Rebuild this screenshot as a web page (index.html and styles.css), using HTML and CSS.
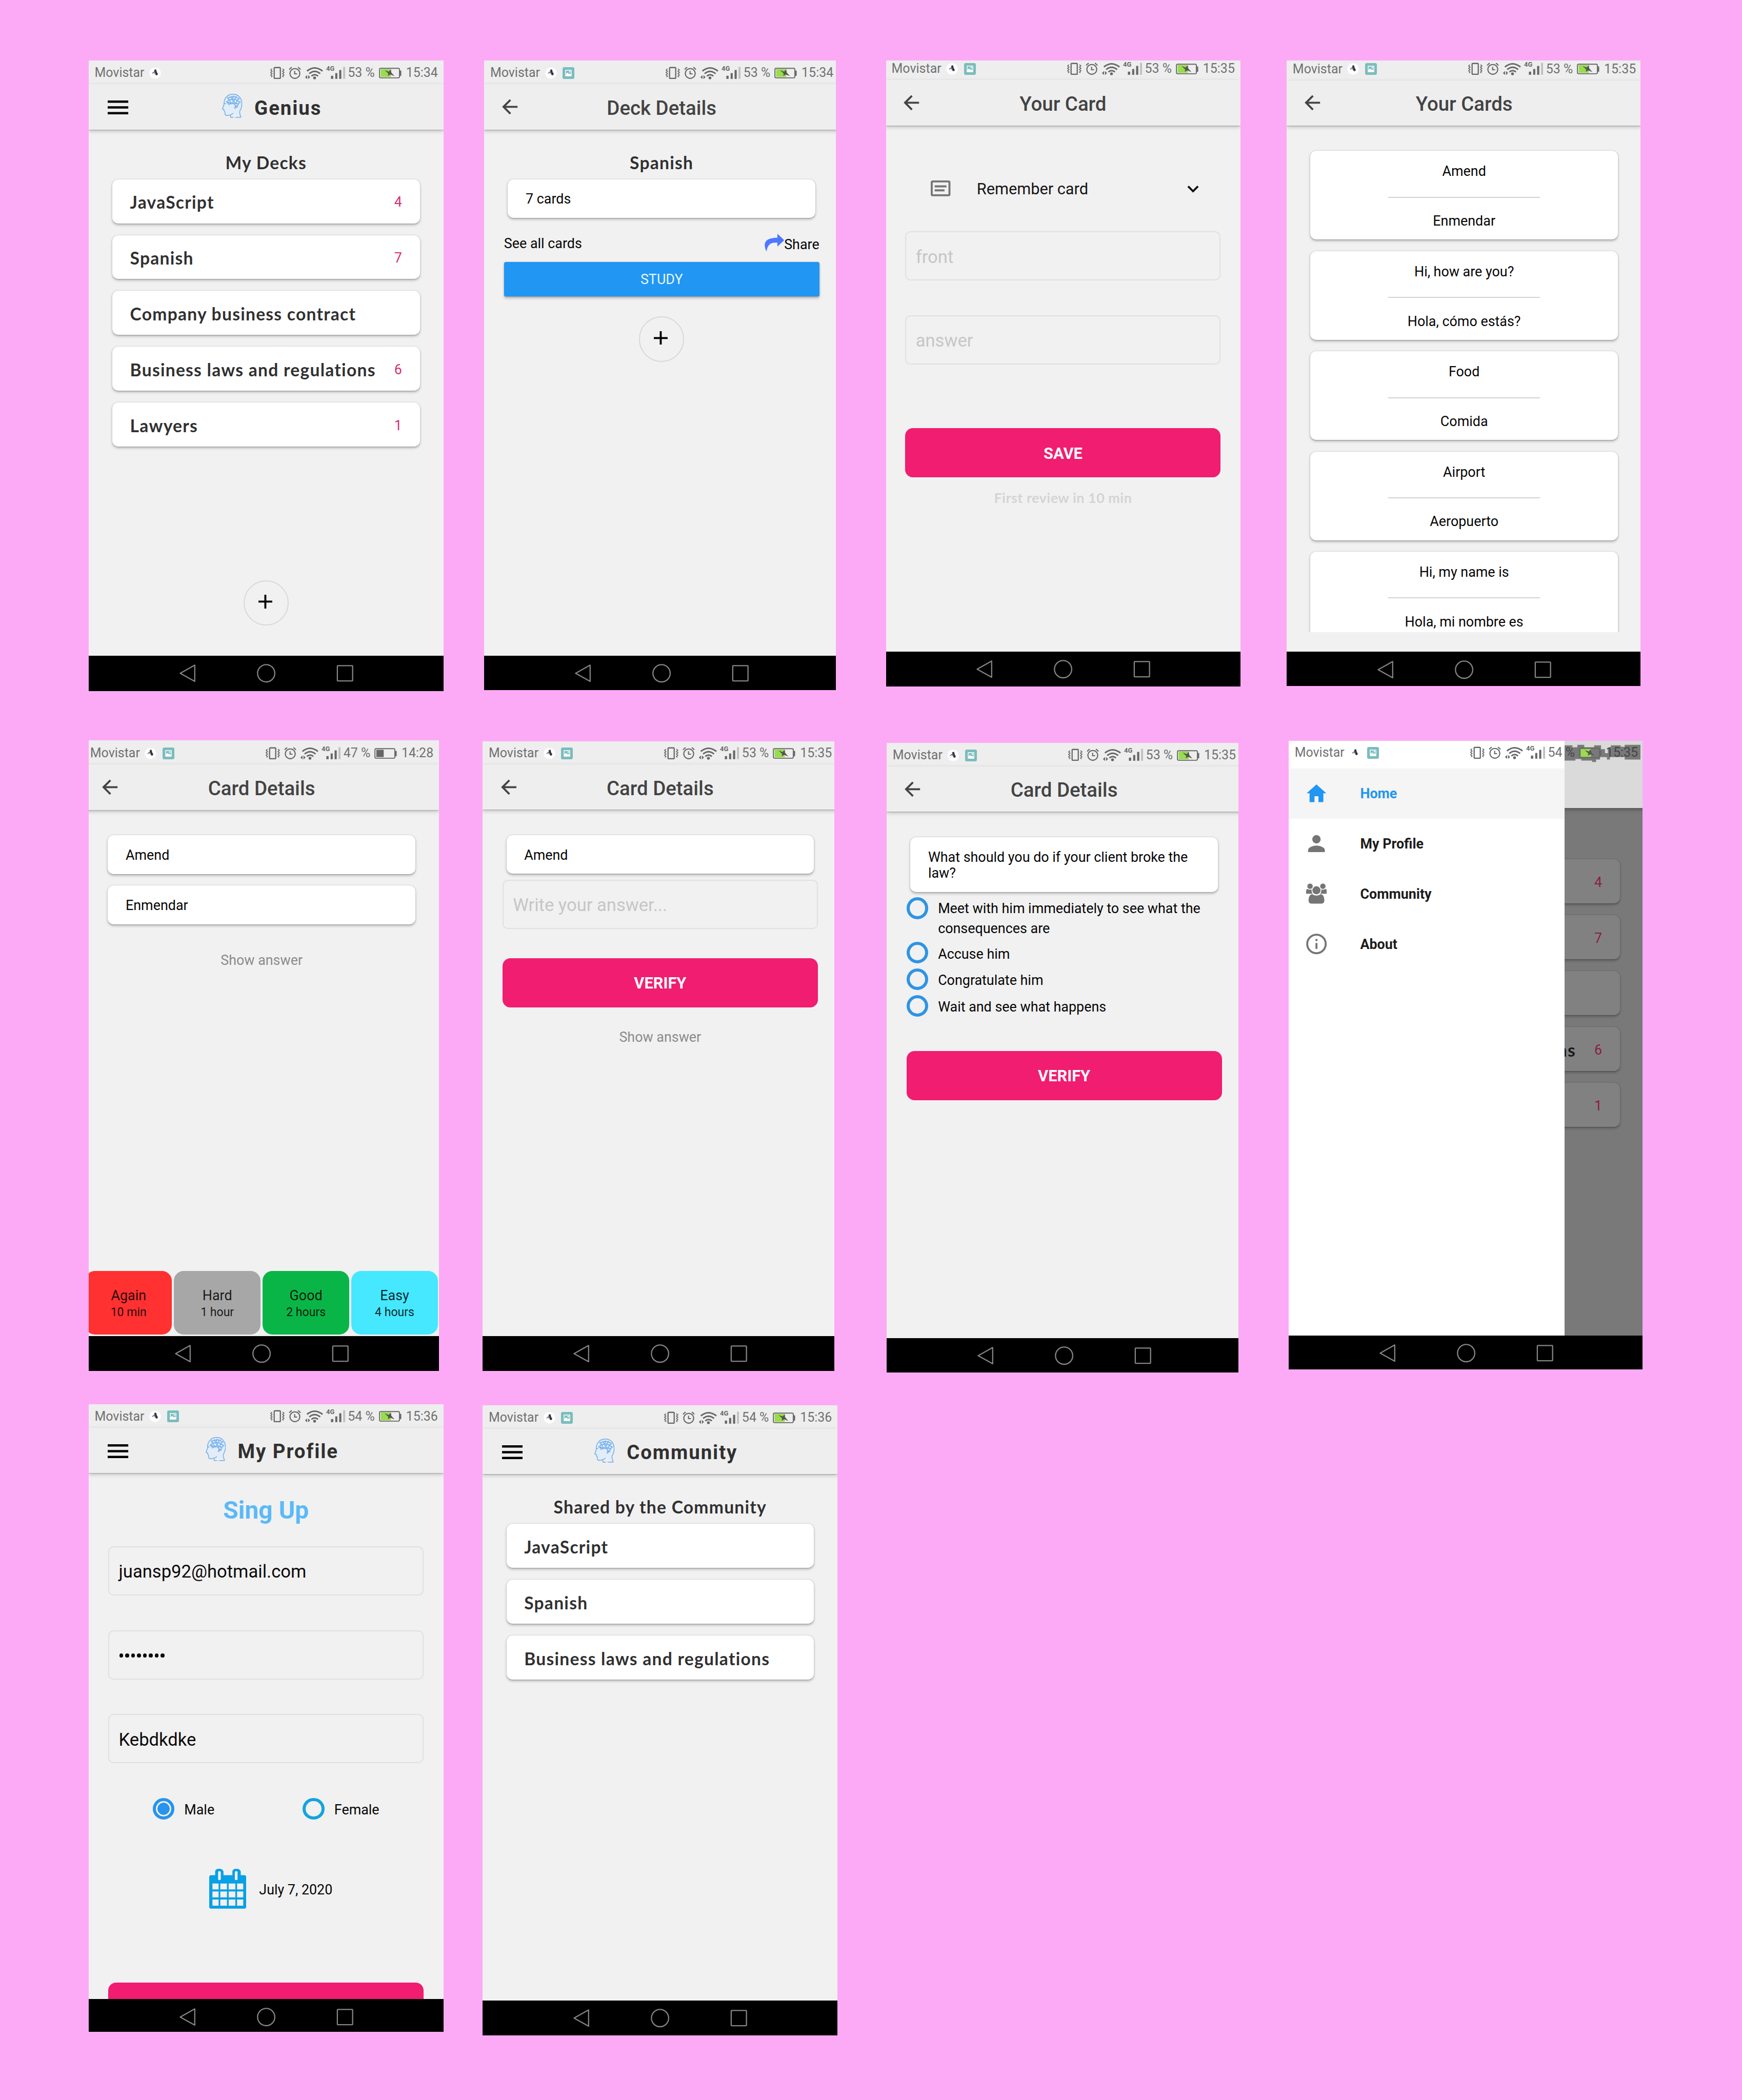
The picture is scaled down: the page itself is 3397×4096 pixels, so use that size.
FILE: index.html
```html
<!DOCTYPE html>
<html lang="en">
<head>
<meta charset="utf-8">
<title>Genius – screens</title>
<link rel="stylesheet" href="styles.css">
</head>
<body>
<svg class="sprite" aria-hidden="true">
  <symbol id="sys" viewBox="0 0 152 32">
    <g fill="none" stroke="#666">
      <rect x="8" y="6" width="12.5" height="22" rx="1.5" stroke-width="2.4"/>
      <path d="M3.8 8.5l-3 2.5 3 2.5-3 2.5 3 2.5-3 2.5 3 2.5-2 2M25 8.5l3 2.5-3 2.5 3 2.5-3 2.5 3 2.5-3 2.5 2 2" stroke-width="1.7"/>
      <circle cx="50" cy="18" r="10" stroke-width="2.2"/>
      <path d="M38.6 10.2q1.8-3.4 5.2-4.8M61.4 10.2q-1.8-3.4-5.2-4.8" stroke-width="2.2"/>
      <path d="M49.6 12.8v6h5" stroke-width="2.2"/>
      <path d="M74.6 13.2q15.4-13 31.6 0M79.2 18.4q11-9.4 22.2 0M83.6 23.4q6.6-5.6 13.4 0" stroke-width="3"/>
    </g>
    <g fill="#666">
      <circle cx="90" cy="27" r="2.9"/>
      <path d="M70.6 25.4l4.2-4v8zM81 25.4l-4.2-4v8z"/>
      <rect x="123.3" y="22.7" width="4.6" height="6.3"/>
      <rect x="132" y="17.3" width="4.2" height="11.7"/>
      <rect x="140" y="11" width="4.3" height="18"/>
      <rect x="148" y="4.7" width="4" height="24.3" fill="#c0c0c0"/>
      <text x="113.6" y="12" class="net">4G</text>
    </g>
  </symbol>
  <symbol id="bat-charge" viewBox="0 0 46 24">
    <rect x="3.6" y="4" width="20.8" height="16" fill="#99dc4c"/>
    <rect x="1.2" y="2.3" width="40.4" height="19.4" rx="2.4" fill="none" stroke="#666" stroke-width="2"/>
    <path d="M42.6 6.7h1.4q1.3 0 1.3 1.4v8.4q0 1.4-1.3 1.4h-1.4z" fill="#666"/>
    <path d="M11.5 6l8.2 3.2 4.6-4.4.6 6 6.8 7.6-8.2-3.6-5.4 3 .8-4.8z" fill="#555"/>
  </symbol>
  <symbol id="bat-half" viewBox="0 0 46 24">
    <rect x="4" y="4.6" width="15" height="14.8" fill="#666"/>
    <rect x="1.2" y="2.3" width="40.4" height="19.4" rx="2.4" fill="none" stroke="#666" stroke-width="2"/>
    <path d="M42.6 6.7h1.4q1.3 0 1.3 1.4v8.4q0 1.4-1.3 1.4h-1.4z" fill="#666"/>
  </symbol>
  <symbol id="bug" viewBox="0 0 24 24">
    <circle cx="12" cy="12" r="11.5" fill="#fff"/>
    <path d="M10 5.5l4-1 1.6 6.2 2 2.6-1 2.8-2.8.4-1.4-2-.8-4.4z" fill="#2f3340"/>
    <path d="M11 8.6L6 12.8M11.4 9.6l-1.2 3.6" stroke="#44485a" stroke-width="1.2" fill="none"/>
  </symbol>
  <symbol id="photo" viewBox="0 0 24 24">
    <rect width="24" height="24" rx="3.5" fill="#7bbcbd"/>
    <path fill="#fff" fill-rule="evenodd" d="M5.5 5.5h13v13h-13zM7 7v7l3-3 3 3 1.500-1.500 2.500 2.500V7z"/>
    <circle cx="14.600" cy="9.400" r="1.500" fill="#fff"/>
  </symbol>
  <symbol id="menu" viewBox="0 0 42 28">
    <path d="M0 0h42v4.700H0zM0 11.650h42v4.700H0zM0 23.300h42v4.700H0z"/>
  </symbol>
  <symbol id="back" viewBox="0 0 32 32">
    <path d="M31.500 16H3M17 2L3 16l14 14" fill="none" stroke="#444" stroke-width="4"/>
  </symbol>
  <symbol id="head" viewBox="0 0 41 49">
    <g fill="none" stroke="#6aa9ea" stroke-width="1.500">
      <path d="M38.500 47.600H27.500M25 47.600h.8M23 47.600h-5.500l-.6-4.200M38.500 47.600q-3.300-8-2.500-12.500 4.300-6.800 4.300-14.500C40.300 8 32.500.8 22.500.8 11 .8 4 8.800 4 19.500q.2 4-1.800 7.300L.8 30q.2 1.600 3 2l.4 3 1.400 1.200.6 5.600q1 2.600 5.300 2.100 7-.6 11.300-4.300M4 20h4" fill="#e2edf8"/>
      <path d="M10 16.500l4.500-4.500L12 8l6-1.500 5-1 5.500 1L34 10l-3.500 3.500L36 17l-3.500 4-4-1.500L24 20l-5-.5-5 1.500zM18 6.500l2.500 5 5-.5 3-4.500M14.500 12l6-.5 3 5 5 3M10 16.500l9 3 4.500-3 2-5.500 5 2.500-2 6M14.500 12l4.500 7.500M23.500 16.500L20.500 11.500 23 5.500M24 20l3 3.500-.5 5M32.500 21l-2 5-4 2.500M27 23.500l3.500 2.500"/>
    </g>
    <g fill="#bcd8f6" stroke="#5fa3ea" stroke-width="1">
      <circle cx="12" cy="8.500" r="1.400"/><circle cx="18" cy="6.500" r="1.400"/><circle cx="23" cy="5.500" r="1.400"/><circle cx="28.500" cy="6.500" r="1.400"/><circle cx="34" cy="10" r="1.400"/><circle cx="36" cy="17" r="1.400"/><circle cx="14.500" cy="12.500" r="1.400"/><circle cx="20.500" cy="11.500" r="1.400"/><circle cx="25.500" cy="11" r="1.400"/><circle cx="30.500" cy="13.500" r="1.400"/><circle cx="10" cy="16.500" r="1.400"/><circle cx="23.500" cy="16.500" r="1.400"/><circle cx="14" cy="21" r="1.400"/><circle cx="19" cy="19.500" r="1.400"/><circle cx="28.500" cy="19.500" r="1.400"/><circle cx="32.500" cy="21" r="1.400"/><circle cx="26.500" cy="28.500" r="1.400"/><circle cx="30.500" cy="26" r="1.400"/>
    </g>
  </symbol>
  <symbol id="plus" viewBox="0 0 28 28"><path d="M12 0h4v12h12v4H16v12h-4V16H0v-4h12z"/></symbol>
  <symbol id="navkeys" viewBox="0 0 353 40">
    <g fill="none" stroke="#858585" stroke-width="2.400" stroke-linejoin="round">
      <path d="M31 3.500v33L1.500 20z"/>
      <circle cx="176" cy="20" r="17.500"/>
      <rect x="320.500" y="4.500" width="31" height="31" rx="1"/>
    </g>
  </symbol>
</svg>

<main class="board">
  <div class="row row-1">

    <section class="phone p1"><div class="screen">
      <div class="status"><span class="carrier">Movistar</span><svg class="bug"><use href="#bug"/></svg><svg class="sys"><use href="#sys"/></svg><span class="pct">53 %</span><svg class="bat"><use href="#bat-charge"/></svg><span class="time">15:34</span></div>
      <header class="bar bar-home"><svg class="menu"><use href="#menu"/></svg><div class="brand"><svg class="head"><use href="#head"/></svg><h1>Genius</h1></div></header>
      <div class="content">
        <h2 class="deck-title">My Decks</h2>
        <ul class="decks">
          <li class="card deck"><span>JavaScript</span><em>4</em></li>
          <li class="card deck"><span>Spanish</span><em>7</em></li>
          <li class="card deck"><span>Company business contract</span></li>
          <li class="card deck"><span>Business laws and regulations</span><em>6</em></li>
          <li class="card deck"><span>Lawyers</span><em>1</em></li>
        </ul>
        <button class="fab fab-home"><svg><use href="#plus"/></svg></button>
      </div>
      <nav class="keys"><svg><use href="#navkeys"/></svg></nav>
    </div></section>

    <section class="phone p2"><div class="screen">
      <div class="status"><span class="carrier">Movistar</span><svg class="bug"><use href="#bug"/></svg><svg class="photo"><use href="#photo"/></svg><svg class="sys"><use href="#sys"/></svg><span class="pct">53 %</span><svg class="bat"><use href="#bat-charge"/></svg><span class="time">15:34</span></div>
      <header class="bar"><svg class="back"><use href="#back"/></svg><h1>Deck Details</h1></header>
      <div class="content">
        <h2 class="deck-title">Spanish</h2>
        <div class="card line">7 cards</div>
        <div class="links"><span>See all cards</span><span class="share"><svg viewBox="0 0 41 36"><path d="M27 0l14 13-14 13v-8C14 17 7 21 5 36 -1 24-3 8 27 8z" fill="#4c77ff"/></svg>Share</span></div>
        <button class="study">STUDY</button>
        <button class="fab fab-deck"><svg><use href="#plus"/></svg></button>
      </div>
      <nav class="keys"><svg><use href="#navkeys"/></svg></nav>
    </div></section>

    <section class="phone p3"><div class="screen">
      <div class="status"><span class="carrier">Movistar</span><svg class="bug"><use href="#bug"/></svg><svg class="photo"><use href="#photo"/></svg><svg class="sys"><use href="#sys"/></svg><span class="pct">53 %</span><svg class="bat"><use href="#bat-charge"/></svg><span class="time">15:35</span></div>
      <header class="bar"><svg class="back"><use href="#back"/></svg><h1>Your Card</h1></header>
      <div class="content">
        <div class="kind"><svg class="kind-icon" viewBox="0 0 40 32"><rect x="2" y="2" width="36" height="28" rx="2" fill="none" stroke="#757575" stroke-width="4"/><path d="M8 10h24v4H8zM8 18h20v4H8z" fill="#757575"/></svg><span>Remember card</span><svg class="chev" viewBox="0 0 24 16"><path d="M2 2.500l10 10 10-10" fill="none" stroke="#111" stroke-width="4"/></svg></div>
        <div class="field">front</div>
        <div class="field">answer</div>
        <button class="pink save">SAVE</button>
        <p class="review">First review in 10 min</p>
      </div>
      <nav class="keys"><svg><use href="#navkeys"/></svg></nav>
    </div></section>

    <section class="phone p4"><div class="screen">
      <div class="status"><span class="carrier">Movistar</span><svg class="bug"><use href="#bug"/></svg><svg class="photo"><use href="#photo"/></svg><svg class="sys"><use href="#sys"/></svg><span class="pct">53 %</span><svg class="bat"><use href="#bat-charge"/></svg><span class="time">15:35</span></div>
      <header class="bar"><svg class="back"><use href="#back"/></svg><h1>Your Cards</h1></header>
      <div class="content">
        <div class="pairs">
          <div class="card pair"><p>Amend</p><hr><p>Enmendar</p></div>
          <div class="card pair"><p>Hi, how are you?</p><hr><p>Hola, cómo estás?</p></div>
          <div class="card pair"><p>Food</p><hr><p>Comida</p></div>
          <div class="card pair"><p>Airport</p><hr><p>Aeropuerto</p></div>
          <div class="card pair"><p>Hi, my name is</p><hr><p>Hola, mi nombre es</p></div>
        </div>
      </div>
      <nav class="keys"><svg><use href="#navkeys"/></svg></nav>
    </div></section>
  </div>

  <div class="row row-2">

    <section class="phone p5"><div class="screen">
      <div class="status"><span class="carrier">Movistar</span><svg class="bug"><use href="#bug"/></svg><svg class="photo"><use href="#photo"/></svg><svg class="sys"><use href="#sys"/></svg><span class="pct">47 %</span><svg class="bat"><use href="#bat-half"/></svg><span class="time">14:28</span></div>
      <header class="bar"><svg class="back"><use href="#back"/></svg><h1>Card Details</h1></header>
      <div class="content details">
        <div class="card line">Amend</div>
        <div class="card line second">Enmendar</div>
        <p class="show show-a">Show answer</p>
        <div class="grades">
          <div class="again"><b>Again</b><small>10 min</small></div>
          <div class="hard"><b>Hard</b><small>1 hour</small></div>
          <div class="good"><b>Good</b><small>2 hours</small></div>
          <div class="easy"><b>Easy</b><small>4 hours</small></div>
        </div>
      </div>
      <nav class="keys"><svg><use href="#navkeys"/></svg></nav>
    </div></section>

    <section class="phone p6"><div class="screen">
      <div class="status"><span class="carrier">Movistar</span><svg class="bug"><use href="#bug"/></svg><svg class="photo"><use href="#photo"/></svg><svg class="sys"><use href="#sys"/></svg><span class="pct">53 %</span><svg class="bat"><use href="#bat-charge"/></svg><span class="time">15:35</span></div>
      <header class="bar"><svg class="back"><use href="#back"/></svg><h1>Card Details</h1></header>
      <div class="content details">
        <div class="card line">Amend</div>
        <div class="field answer">Write your answer...</div>
        <button class="pink verify-a">VERIFY</button>
        <p class="show show-b">Show answer</p>
      </div>
      <nav class="keys"><svg><use href="#navkeys"/></svg></nav>
    </div></section>

    <section class="phone p7"><div class="screen">
      <div class="status"><span class="carrier">Movistar</span><svg class="bug"><use href="#bug"/></svg><svg class="photo"><use href="#photo"/></svg><svg class="sys"><use href="#sys"/></svg><span class="pct">53 %</span><svg class="bat"><use href="#bat-charge"/></svg><span class="time">15:35</span></div>
      <header class="bar"><svg class="back"><use href="#back"/></svg><h1>Card Details</h1></header>
      <div class="content details">
        <div class="card question">What should you do if your client broke the<br>law?</div>
        <ul class="options">
          <li><i class="radio"></i><span>Meet with him immediately to see what the<br>consequences are</span></li>
          <li><i class="radio"></i><span>Accuse him</span></li>
          <li><i class="radio"></i><span>Congratulate him</span></li>
          <li><i class="radio"></i><span>Wait and see what happens</span></li>
        </ul>
        <button class="pink verify-b">VERIFY</button>
      </div>
      <nav class="keys"><svg><use href="#navkeys"/></svg></nav>
    </div></section>

    <section class="phone p8"><div class="screen">
      <div class="status status-drawer"><svg class="patch" viewBox="0 0 160 48"><path d="M0 9h16v4h10V8h14v5h20V9h14v8h8v8h6v-9h6v-7h20v3h8V8h32v30h-32v-5H92v5h-6v-5H72v5h-8v5H56v-3H34v-3H22v3H0z" fill="#797979"/></svg><span class="carrier">Movistar</span><svg class="bug"><use href="#bug"/></svg><svg class="photo"><use href="#photo"/></svg><svg class="sys"><use href="#sys"/></svg><span class="pct">54 <span class="dark">%</span></span><svg class="bat"><use href="#bat-charge"/></svg><span class="time dark">15:35</span></div>
      <div class="content split">
        <ul class="drawer">
          <li class="on"><svg viewBox="0 0 42 42"><path d="M17 39V27h8v12h10V21h6L21 3 1 21h6v18z"/></svg>Home</li>
          <li><svg viewBox="0 0 42 42"><circle cx="21" cy="12.500" r="8.500"/><path d="M4 38.500v-4.300C4 28.500 15.300 25.300 21 25.300s17 3.200 17 8.900v4.300z"/></svg>My Profile</li>
          <li><svg viewBox="0 0 42 42"><circle cx="8" cy="5.800" r="5.500"/><circle cx="34" cy="5.800" r="5.500"/><circle cx="21" cy="14" r="8.200"/><path d="M0 21v-4c0-4 1-5.500 3-5.500 2 1.500 6 2 8.500.8-.8 3.700 0 6.500 2 8.700zM42 21v-4c0-4-1-5.500-3-5.500-2 1.500-6 2-8.500.8.8 3.700 0 6.500-2 8.700zM10.500 41C6.500 41 5 38 5 35c0-8 2.500-13 8-13 4.500 3.500 11.500 3.500 16 0 5.500 0 8 5 8 13 0 3-1.500 6-5.500 6z"/></svg>Community</li>
          <li><svg viewBox="0 0 42 42"><circle cx="21" cy="21" r="18.800" fill="none" stroke="#757575" stroke-width="4"/><path d="M19 11h4v4h-4zM19 19h4v12h-4z"/></svg>About</li>
        </ul>
        <div class="behind">
          <div class="behind-bar"></div>
          <ul class="decks">
            <li class="card deck"><em>4</em></li>
            <li class="card deck"><em>7</em></li>
            <li class="card deck"></li>
            <li class="card deck"><span class="tail">ns</span><em>6</em></li>
            <li class="card deck"><em>1</em></li>
          </ul>
        </div>
      </div>
      <nav class="keys"><svg><use href="#navkeys"/></svg></nav>
    </div></section>
  </div>

  <div class="row row-3">

    <section class="phone p9"><div class="screen">
      <div class="status"><span class="carrier">Movistar</span><svg class="bug"><use href="#bug"/></svg><svg class="photo"><use href="#photo"/></svg><svg class="sys"><use href="#sys"/></svg><span class="pct">54 %</span><svg class="bat"><use href="#bat-charge"/></svg><span class="time">15:36</span></div>
      <header class="bar bar-home"><svg class="menu"><use href="#menu"/></svg><div class="brand"><svg class="head"><use href="#head"/></svg><h1>My Profile</h1></div></header>
      <div class="content">
        <h2 class="signup">Sing Up</h2>
        <div class="field filled">juansp92@hotmail.com</div>
        <div class="field filled dots"><i></i><i></i><i></i><i></i><i></i><i></i><i></i><i></i></div>
        <div class="field filled">Kebdkdke</div>
        <div class="sexes"><span><i class="radio checked"></i>Male</span><span><i class="radio sky"></i>Female</span></div>
        <div class="date"><svg viewBox="0 0 75 81"><path d="M4 13h8V6q0-6 8-6t9 6v7h18V6q0-6 8-6t9 6v7h7q4 0 4 4v60q0 4-4 4H4q-4 0-4-4V17q0-4 4-4z" fill="#08a0e6"/><g fill="#f1f1f1"><rect x="18" y="5" width="5.500" height="18" rx="2"/><rect x="52" y="5" width="5.500" height="18" rx="2"/><path d="M6.500 30H19v12H6.500zM22.500 30h13.500v12H22.500zM39.500 30H53v12H39.500zM56.500 30H69v12H56.500zM6.500 46H19v12H6.500zM22.500 46h13.500v12H22.500zM39.500 46H53v12H39.500zM56.500 46H69v12H56.500zM6.500 62.500H19V75H6.500zM22.500 62.500h13.500V75H22.500zM39.500 62.500H53V75H39.500zM56.500 62.500H69V75H56.500z"/></g></svg><span>July 7, 2020</span></div>
        <button class="pink submit"></button>
      </div>
      <nav class="keys"><svg><use href="#navkeys"/></svg></nav>
    </div></section>

    <section class="phone p10"><div class="screen">
      <div class="status"><span class="carrier">Movistar</span><svg class="bug"><use href="#bug"/></svg><svg class="photo"><use href="#photo"/></svg><svg class="sys"><use href="#sys"/></svg><span class="pct">54 %</span><svg class="bat"><use href="#bat-charge"/></svg><span class="time">15:36</span></div>
      <header class="bar bar-home"><svg class="menu"><use href="#menu"/></svg><div class="brand"><svg class="head"><use href="#head"/></svg><h1>Community</h1></div></header>
      <div class="content">
        <h2 class="deck-title">Shared by the Community</h2>
        <ul class="decks">
          <li class="card deck"><span>JavaScript</span></li>
          <li class="card deck"><span>Spanish</span></li>
          <li class="card deck"><span>Business laws and regulations</span></li>
        </ul>
      </div>
      <nav class="keys"><svg><use href="#navkeys"/></svg></nav>
    </div></section>
  </div>
</main>
</body>
</html>
```

FILE: styles.css
```css
* { box-sizing: border-box; margin: 0; padding: 0; }
html { overflow: hidden; background: #fcaaf6; }
body {
  background: #fcaaf6;
  font-family: Roboto, "Liberation Sans", sans-serif;
  font-size: 28px;
  line-height: 33px;
  color: #060606;
}
ul { list-style: none; }
button { border: 0; font: inherit; display: flex; align-items: center; justify-content: center; }
.sprite { display: none; }

/* Board: screenshots laid out in three rows */
.board { width: 3536px; height: 4264px; padding-top: 123px; zoom: 0.9607; }
.row { display: flex; align-items: flex-start; padding-left: 180px; }
.row-1 { height: 1380px; }
.row-2 { height: 1348px; }
.phone { flex: none; overflow: hidden; background: #eee; }
.screen { width: 720px; height: 1280px; display: flex; flex-direction: column; background: #f1f1f1; }

.p1 { width: 720px; height: 1280px; }
.p2 { width: 714px; height: 1278px; margin-left: 83px; }
.p3 { width: 719px; height: 1271px; margin-left: 102px; }
.p3 .screen { margin: -8.2px 0 0 -1.3px; }
.p4 { width: 718px; height: 1270px; margin-left: 94px; }
.p4 .screen { margin-top: -8px; }
.p5 { width: 711px; height: 1280px; }
.p5 .screen { margin: 1.5px 0 0 -9px; }
.p6 { width: 714px; height: 1278px; margin: 2px 0 0 89px; }
.p6 .screen { margin-top: -1px; }
.p7 { width: 714px; height: 1279px; margin: 5px 0 0 106px; }
.p8 { width: 718px; height: 1276px; margin: 1.5px 0 0 102px; }
.p8 .screen { margin-top: -1.5px; }
.p9 { width: 720px; height: 1274px; }
.p9 .screen { margin-top: -.5px; }
.p10 { width: 720px; height: 1279px; margin: 2px 0 0 80px; }

/* Android status bar */
.status {
  flex: none; height: 48px; padding: 3px 11px 0 12px;
  display: flex; align-items: center;
  background: #eee; color: #707070; font-size: 26px; line-height: 30px;
  white-space: nowrap;
}
.status svg { flex: none; }
.carrier { width: 102px; }
.bug { width: 24px; height: 24px; margin-left: 9px; }
.photo { width: 24px; height: 24px; margin-left: 12px; }
.sys { width: 152px; height: 32px; margin: -3px 6px 0 auto; }
.net { font: 700 13.5px Roboto, sans-serif; }
.pct { width: 55px; margin-right: 8px; }
.bat { width: 46px; height: 24px; margin-right: 9px; }
.time { width: 65px; }

/* App bar */
.bar {
  flex: none; height: 92px; padding-top: 5px; position: relative; z-index: 1;
  display: grid; grid-template-columns: 110px 1fr 110px; align-items: center;
  background: #eee; box-shadow: 0 1px 2px rgba(0,0,0,.22), 0 3px 8px rgba(0,0,0,.2);
}
.bar h1 { font-size: 40px; line-height: 48px; font-weight: 500; color: #434343; text-align: center; white-space: nowrap; }
.back { width: 32px; height: 32px; margin: -5px 0 0 36.5px; }
.menu { width: 42px; height: 28px; margin: -2px 0 0 39px; }
.brand { display: flex; justify-content: center; padding-left: 24px; }
.head { flex: none; width: 41px; height: 49px; margin: -5px 24.5px 0 0; }
.bar-home h1 { font-weight: 700; letter-spacing: 2px; color: #303030; }

.content { flex: 1; min-height: 0; overflow: hidden; display: flex; flex-direction: column; padding: 0 40px; }
.keys { flex: none; height: 71.5px; display: flex; align-items: center; justify-content: center; background: #000; }
.keys svg { width: 353px; height: 40px; margin-left: 1px; }

/* Decks */
.deck-title {
  margin: 47px 0 14px; height: 40px; line-height: 40px; text-align: center;
  font-family: Lato, sans-serif; font-size: 35px; font-weight: 700; letter-spacing: 1.3px; color: #303030; white-space: nowrap;
}
.card {
  flex: none; margin: 0 8px; background: #fff; border-radius: 12px;
  box-shadow: 0 1px 2px rgba(0,0,0,.2), 0 3px 6px rgba(0,0,0,.24);
}
.decks { display: flex; flex-direction: column; gap: 24px; }
.deck {
  height: 89.4px; padding: 5px 36px 0; display: flex; align-items: center; justify-content: space-between;
  font-family: Lato, sans-serif; font-size: 35px; font-weight: 700; letter-spacing: 1.3px; color: #303030; white-space: nowrap;
}
.deck em { font: 400 28px/33px Roboto, sans-serif; letter-spacing: 0; color: #d6306f; margin-left: auto; }
.fab {
  flex: none; align-self: center; width: 92px; height: 92px; border-radius: 50%;
  border: 2.200px solid #d8d8d8; background: none;
}
.fab svg { width: 28px; height: 28px; margin: -5px 3px 0 0; }
.fab-home { margin-top: 271px; }
.fab-deck { margin-top: 41px; }

.line { height: 78.5px; padding: 4px 36px 0; display: flex; align-items: center; }
.links { display: flex; justify-content: space-between; height: 89px; padding: 36px 0 0; }
.share { display: flex; margin-top: 2px; }
.share svg { width: 41px; height: 36px; margin-top: -6px; }
.study {
  flex: none; height: 70px; border-radius: 4px; background: #2196f3; color: #e8f8ff; padding-top: 3px;
  box-shadow: 0 1px 2px rgba(0,0,0,.25), 0 4px 6px rgba(0,0,0,.22);
}

/* Card editor */
.kind { display: flex; align-items: center; height: 40px; margin: 109px 0 66px; padding: 0 44px 0 52px; font-size: 32px; line-height: 38px; color: #161616; }
.kind span { padding-top: 1px; }
.kind-icon { width: 40px; height: 32px; margin: -3px 53px 0 0; }
.chev { width: 24px; height: 16px; margin-left: auto; }
.field {
  flex: none; height: 100px; margin-bottom: 70.3px; padding: 3px 19px 0; display: flex; align-items: center;
  border: 2.200px solid #e0e0e0; border-radius: 11px; font-size: 36px; line-height: 42px; color: #c6c6c6;
}
.pink { flex: none; height: 99.5px; border-radius: 16px; background: #f01d70; color: #fff; font-size: 32px; line-height: 38px; font-weight: 700; padding-top: 4px; }
.save { margin-top: 59px; }
.review { margin-top: 25px; line-height: 34px; text-align: center; font-family: Lato, sans-serif; font-size: 28px; font-weight: 700; letter-spacing: .55px; color: #d4d4d4; }

/* All cards */
.pairs { height: 1028px; margin: 0 -8px; padding: 51.5px 8px 0; overflow: hidden; display: flex; flex-direction: column; gap: 23.4px; }
.pair { height: 180px; padding-top: 26px; display: flex; flex-direction: column; align-items: center; }
.pair hr { flex: none; width: 308px; height: 2.200px; border: 0; background: #d2d2d2; margin: 34px 0 31.500px; }
.pair p { height: 33px; }

/* Study */
.details { padding-top: 51.5px; }
.second { margin-top: 23.7px; }
.show { text-align: center; color: #8b8b8b; }
.show-a { margin-top: 57px; }
.show-b { margin-top: 45px; }
.grades { display: flex; gap: 4px; margin: auto -38px 3px; }
.grades div { flex: 1; height: 130px; border-radius: 20px; display: flex; flex-direction: column; align-items: center; justify-content: center; padding-top: 6px; color: rgba(0,0,0,.85); }
.grades b { font-weight: 400; line-height: 34px; }
.grades small { font-size: 24px; line-height: 35px; }
.again { background: #ff3131; }
.hard { background: #a7a7a7; }
.good { background: #0ab548; }
.easy { background: #45e8ff; }
.answer { margin: 12px 0 59.5px; }
.question { height: 111.5px; padding: 25px 36px 0; white-space: nowrap; }
.options { display: flex; flex-direction: column; gap: 10px; margin: 11px 0 70px; white-space: nowrap; }
.options li { display: flex; gap: 20px; line-height: 40px; }
.options li:first-child { height: 80px; }
.options span { padding-top: 5px; height: 44px; }
.options li:first-child span { padding-top: 3px; }
.radio { flex: none; width: 44px; height: 44px; border-radius: 50%; border: 6.500px solid #2d94e6; }
.radio.sky { border-color: #12a4df; }
.radio.checked { border-color: #2893ee; background: radial-gradient(circle, #2893ee 12px, transparent 12.6px); }

/* Drawer over dimmed home */
.status-drawer { position: relative; background: linear-gradient(to right, #fff 560px, #dadada 560px); }
.status-drawer > * { position: relative; }
.status-drawer .patch { position: absolute; left: 560px; top: 1px; width: 160px; height: 48px; }
.dark { color: #444; }
.split { flex-direction: row; padding: 0; }
.drawer { width: 560px; padding-top: 9px; background: #fff; font-weight: 700; color: #1c1c1c; position: relative; z-index: 2; }
.drawer li { height: 102px; display: flex; align-items: center; padding: 2px 0 0 35px; }
.drawer svg { width: 42px; height: 42px; margin: -2px 68px 0 0; fill: #757575; }
.drawer .on { background: #f5f5f5; color: #2196f3; }
.drawer .on svg { fill: #2196f3; }
.behind { width: 160px; overflow: hidden; background: #797979; }
.behind-bar { height: 89px; background: #dadada; box-shadow: 0 2px 6px 2px #5a5a5a; margin-bottom: 105px; }
.behind .decks { width: 624px; margin-left: -512px; }
.behind .card { margin: 0; background: #818181; color: #1a1a1a; }
.behind em { color: #8a1c48; }
.tail { margin-left: 461px; }

/* Profile */
.signup { margin: 47px 0 44px; height: 59px; line-height: 58px; font-size: 50px; font-weight: 700; text-align: center; color: #5bb9f8; }
.filled { color: #0a0a0a; }
.dots { gap: 4px; padding-left: 20px; padding-top: 3px; }
.dots i { width: 8px; height: 8px; border-radius: 50%; background: #0a0a0a; }
.sexes { flex: none; display: flex; padding-left: 90px; height: 44px; }
.sexes span { flex: none; display: flex; gap: 20px; width: 304.5px; line-height: 48px; }
.date { flex: none; display: flex; align-items: center; margin: 100px 0 150px 205px; height: 81px; }
.date svg { width: 75px; height: 81px; margin-right: 26px; }
.date span { padding-top: 5px; }
```
